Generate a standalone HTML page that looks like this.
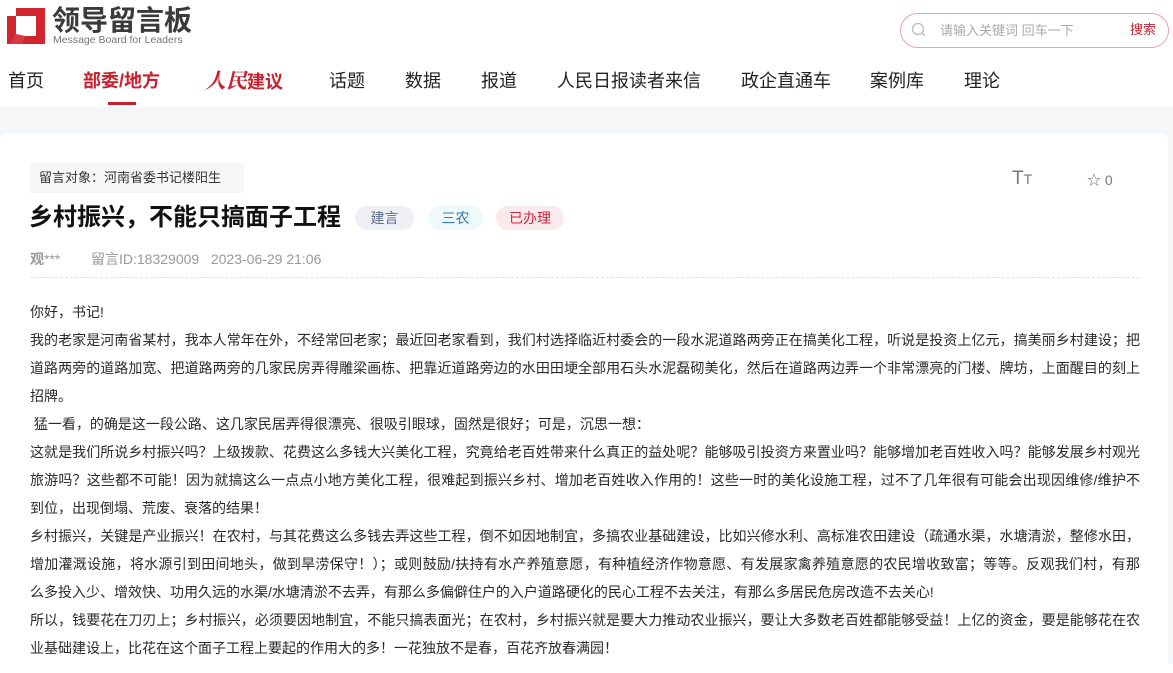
<!DOCTYPE html>
<html><head><meta charset="utf-8"><style>
*{margin:0;padding:0;box-sizing:border-box}
body{width:1173px;height:664px;overflow:hidden;background:#fff;font-family:"Liberation Sans","Noto Sans CJK SC",sans-serif;color:#333;position:relative}
.abs{position:absolute;white-space:nowrap}
.nav{position:absolute;top:69px;font-size:18px;color:#222;line-height:24px}
.band{position:absolute;left:0;top:107px;width:1173px;height:557px;background:#f5f6f7}
.card{position:absolute;left:0;top:133px;width:1168px;height:540px;background:#fff;border-radius:8px}
.pill{position:absolute;top:206px;height:24px;line-height:24px;border-radius:12px;font-size:14px;text-align:center}
.body{position:absolute;left:30px;top:298px;width:1110px;font-size:14px;color:#2a2a2a;line-height:28px}
.body div{height:28px;white-space:nowrap}
.body .j{text-align:justify;text-align-last:justify;white-space:normal;overflow:hidden}
</style></head><body>
<svg class="abs" style="left:7px;top:8px" width="38" height="36" viewBox="0 0 38 36">
<path fill="#d0242f" d="M9 0H38V36H14L18 28H29V8H9Z"/>
<path fill="#d0242f" d="M0 8H9V26L4 36H0Z"/>
<path fill="#d0242f" d="M9 26L4 36H14L18 28Z" opacity="0.9"/>
</svg>
<div class="abs" style="left:52px;top:6px;font-size:28px;font-weight:bold;color:#3a3a3a;letter-spacing:0px;line-height:30px">领导留言板</div>
<div class="abs" style="left:53px;top:34px;font-size:10.5px;color:#777;line-height:12px">Message Board for Leaders</div>
<div class="abs" style="left:900px;top:13px;width:269px;height:35px;border:1px solid #e6a3ab;border-radius:18px"></div>
<svg class="abs" style="left:911px;top:22px" width="16" height="16" viewBox="0 0 16 16"><circle cx="7" cy="7" r="5.5" fill="none" stroke="#bbb" stroke-width="1.3"/><path d="M11 11L14 14" stroke="#bbb" stroke-width="1.3"/></svg>
<div class="abs" style="left:940px;top:22px;font-size:13px;color:#aaa;line-height:18px">请输入关键词 回车一下</div>
<div class="abs" style="left:1130px;top:21px;font-size:13px;color:#c8202e;line-height:18px">搜索</div>

<div class="nav" style="left:8px">首页</div>
<div class="nav" style="left:83px;color:#c8202e;font-weight:bold">部委/地方</div>
<div class="nav" style="left:205px;color:#c8202e;font-weight:bold"><span style="font-family:'Liberation Serif','Noto Serif CJK SC',serif;font-style:italic;font-size:21px">人民</span>建议</div>
<div class="nav" style="left:329px">话题</div>
<div class="nav" style="left:405px">数据</div>
<div class="nav" style="left:481px">报道</div>
<div class="nav" style="left:557px">人民日报读者来信</div>
<div class="nav" style="left:741px">政企直通车</div>
<div class="nav" style="left:870px">案例库</div>
<div class="nav" style="left:964px">理论</div>
<div class="abs" style="left:108px;top:102px;width:28px;height:3px;background:#c8202e"></div>

<div class="band"></div>
<div class="card"></div>
<div class="abs" style="left:30px;top:163px;width:214px;height:30px;background:#f5f6f8;font-size:13px;line-height:30px;padding-left:9px;color:#333">留言对象：河南省委书记楼阳生</div>
<div class="abs" style="left:1012px;top:168px;font-size:19px;color:#777;line-height:22px">T<span style="font-size:14px">T</span></div>
<div class="abs" style="left:1087px;top:171px;font-size:14px;color:#777;line-height:18px">☆ 0</div>
<div class="abs" style="left:29px;top:203px;font-size:24px;font-weight:bold;color:#111;line-height:30px">乡村振兴，不能只搞面子工程</div>
<div class="pill" style="left:355px;width:59px;background:#eef0f5;color:#5b6b8c">建言</div>
<div class="pill" style="left:428px;width:55px;background:#edf9fa;color:#3d79a8">三农</div>
<div class="pill" style="left:496px;width:68px;background:#fbeaec;color:#d0243a">已办理</div>
<div class="abs" style="left:30px;top:250px;font-size:14px;color:#999;line-height:18px"><b>观</b>***</div>
<div class="abs" style="left:91px;top:250px;font-size:14px;color:#999;line-height:18px">留言ID:18329009&nbsp;&nbsp;&nbsp;2023-06-29 21:06</div>
<div class="abs" style="left:30px;top:277px;width:1110px;border-top:1px dashed #e2e2e2"></div>

<div class="body">
<div>你好，书记!</div>
<div class="j">我的老家是河南省某村，我本人常年在外，不经常回老家；最近回老家看到，我们村选择临近村委会的一段水泥道路两旁正在搞美化工程，听说是投资上亿元，搞美丽乡村建设；把</div>
<div class="j">道路两旁的道路加宽、把道路两旁的几家民房弄得雕梁画栋、把靠近道路旁边的水田田埂全部用石头水泥磊砌美化，然后在道路两边弄一个非常漂亮的门楼、牌坊，上面醒目的刻上</div>
<div>招牌。</div>
<div>&nbsp;猛一看，的确是这一段公路、这几家民居弄得很漂亮、很吸引眼球，固然是很好；可是，沉思一想：</div>
<div class="j">这就是我们所说乡村振兴吗？上级拨款、花费这么多钱大兴美化工程，究竟给老百姓带来什么真正的益处呢？能够吸引投资方来置业吗？能够增加老百姓收入吗？能够发展乡村观光</div>
<div class="j">旅游吗？这些都不可能！因为就搞这么一点点小地方美化工程，很难起到振兴乡村、增加老百姓收入作用的！这些一时的美化设施工程，过不了几年很有可能会出现因维修/维护不</div>
<div>到位，出现倒塌、荒废、衰落的结果！</div>
<div class="j">乡村振兴，关键是产业振兴！在农村，与其花费这么多钱去弄这些工程，倒不如因地制宜，多搞农业基础建设，比如兴修水利、高标准农田建设（疏通水渠，水塘清淤，整修水田，</div>
<div class="j">增加灌溉设施，将水源引到田间地头，做到旱涝保守！）；或则鼓励/扶持有水产养殖意愿，有种植经济作物意愿、有发展家禽养殖意愿的农民增收致富；等等。反观我们村，有那</div>
<div>么多投入少、增效快、功用久远的水渠/水塘清淤不去弄，有那么多偏僻住户的入户道路硬化的民心工程不去关注，有那么多居民危房改造不去关心!</div>
<div class="j">所以，钱要花在刀刃上；乡村振兴，必须要因地制宜，不能只搞表面光；在农村，乡村振兴就是要大力推动农业振兴，要让大多数老百姓都能够受益！上亿的资金，要是能够花在农</div>
<div>业基础建设上，比花在这个面子工程上要起的作用大的多！一花独放不是春，百花齐放春满园！</div>
</div>
</body></html>
